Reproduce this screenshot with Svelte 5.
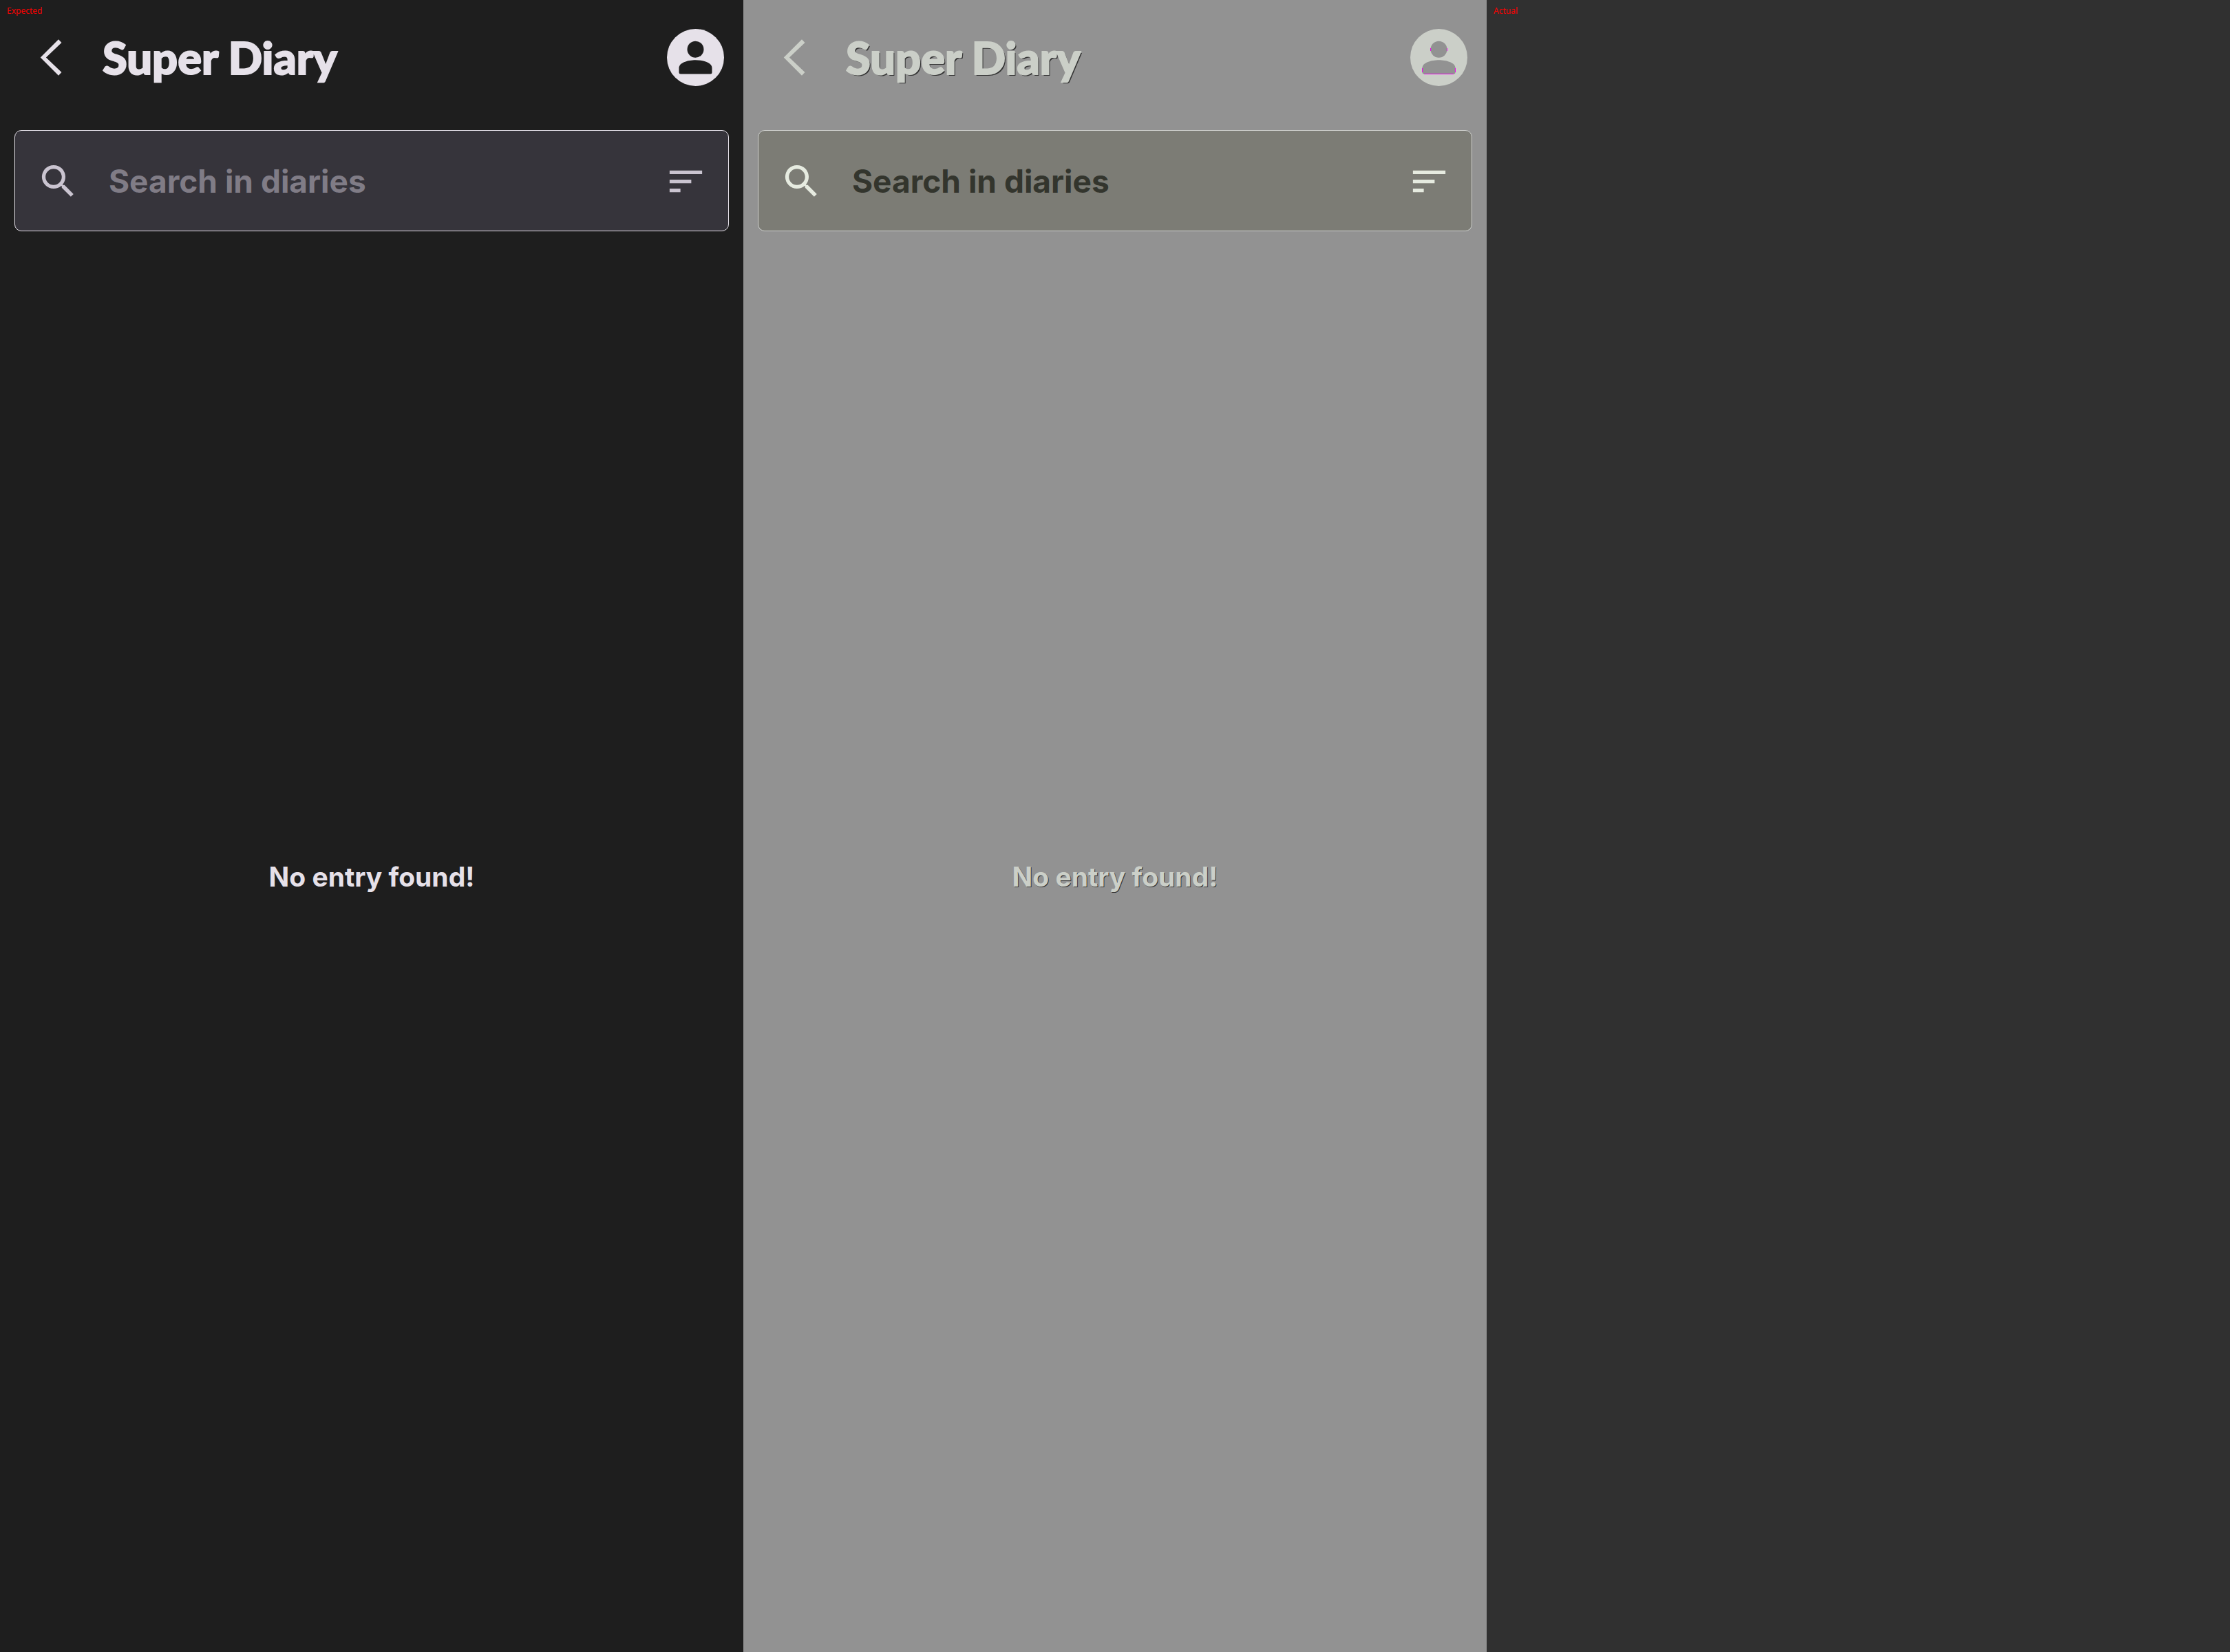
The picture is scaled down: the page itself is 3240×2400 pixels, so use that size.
<script>
  const panels = [
    { kind: 'expected', label: 'Expected' },
    { kind: 'difference', label: '' }
  ];
</script>

<main class="comparison">
  {#each panels as panel}
    <section class="panel {panel.kind}">
      {#if panel.label}<span class="tag">{panel.label}</span>{/if}
      <header class="app-bar">
        <button class="icon-button" aria-label="Back">
          <svg class="icon" viewBox="0 0 24 24"><path d="M17.7 3.8 16 2 6 12l10 10 1.7-1.8L9.1 12z" /></svg>
        </button>
        <h1>Super Diary</h1>
        <button class="icon-button" aria-label="Account">
          <svg class="avatar" viewBox="0 0 83 83">
            <circle cx="41.5" cy="41.5" r="41.5" />
            <circle class="cut" cx="41.5" cy="29.7" r="12" />
            <path class="cut" d="M17.5 56.5C17.5 49 31 45.2 41.5 45.2S65.5 49 65.5 56.5V63q0 2.5-2.5 2.5H20q-2.5 0-2.5-2.5z" />
            {#if panel.kind === 'difference'}
              <path class="mark" d="M20 65.5h43M17.5 57v6M65.5 57v6M29.5 28v4M53.5 28v4" />
            {/if}
          </svg>
        </button>
      </header>
      <div class="search">
        <svg class="icon" viewBox="0 0 24 24"><path d="M15.5 14h-.79l-.28-.27A6.471 6.471 0 0 0 16 9.5 6.5 6.5 0 1 0 9.5 16c1.61 0 3.09-.59 4.23-1.57l.27.28v.79l5 4.99L20.49 19l-4.99-5zm-6 0C7.01 14 5 11.99 5 9.5S7.01 5 9.5 5 14 7.01 14 9.5 11.99 14 9.5 14z" /></svg>
        <input type="text" placeholder="Search in diaries" aria-label="Search in diaries" />
        <button class="icon-button" aria-label="Sort">
          <svg class="icon" viewBox="0 0 24 24"><path d="M3 18h6v-2H3v2zM3 6v2h18V6H3zm0 7h12v-2H3v2z" /></svg>
        </button>
      </div>
      <div class="empty"><p>No entry found!</p></div>
    </section>
  {/each}
  <section class="panel actual"><span class="tag">Actual</span></section>
</main>

<style>
  :global(body) {
    background: #303030;
  }
  .comparison {
    display: grid;
    grid-template-columns: repeat(3, 1fr);
    min-height: 100vh;
    font-family: Inter, sans-serif;
  }
  .panel {
    position: relative;
    display: flex;
    flex-direction: column;
    min-width: 0;
    background: var(--bg);
    color: var(--ink);
  }
  .expected {
    --bg: #1e1e1e;
    --ink: #e6e1e9;
    --field: #36343b;
    --line: #e6e1e9;
    --icon: #cac4d0;
    --hint: #807c86;
  }
  .difference {
    --bg: #929292;
    --ink: #cbcfc8;
    --field: #7c7c75;
    --line: #cfd1ce;
    --icon: #e6ebe0;
    --hint: #33352d;
  }
  .actual {
    --bg: #303030;
  }
  .tag {
    position: absolute;
    top: 8px;
    left: 10px;
    font: 12px/16px "Noto Sans", sans-serif;
    color: #ff0000;
  }
  .app-bar {
    display: flex;
    align-items: center;
    height: 167px;
    padding: 0 28px 0 43px;
  }
  h1 {
    flex: 1;
    margin: 0 0 0 43px;
    padding-bottom: 2px;
    font: 900 65px/72px Lato, sans-serif;
    -webkit-text-stroke: 2px var(--ink);
  }
  .difference h1 {
    text-shadow: 2px 2px 0 #333333;
  }
  .difference p {
    text-shadow: 1px 1px 0 #333333;
  }
  .icon-button {
    display: flex;
    padding: 0;
    border: 0;
    background: none;
    color: inherit;
  }
  .icon {
    flex: none;
    width: 63px;
    height: 63px;
    fill: currentColor;
  }
  .avatar {
    width: 83px;
    height: 83px;
    fill: currentColor;
  }
  .cut {
    fill: var(--bg);
  }
  .mark {
    fill: none;
    stroke: #f000f0;
  }
  .search {
    display: flex;
    align-items: center;
    gap: 42px;
    box-sizing: border-box;
    height: 147px;
    margin: 22px 21px 0;
    padding: 1px 30px 0 31px;
    border: 1px solid var(--line);
    border-radius: 10px;
    background: var(--field);
    color: var(--icon);
  }
  input {
    flex: 1;
    min-width: 0;
    padding: 0;
    border: 0;
    outline: 0;
    background: none;
    color: var(--ink);
    font: 700 46px/56px Inter, sans-serif;
  }
  input::placeholder {
    color: var(--hint);
    opacity: 1;
  }
  .empty {
    flex: 1;
    display: flex;
    align-items: center;
    justify-content: center;
    padding-bottom: 188px;
  }
  p {
    margin: 0;
    font: 700 39px/48px Inter, sans-serif;
  }
</style>
